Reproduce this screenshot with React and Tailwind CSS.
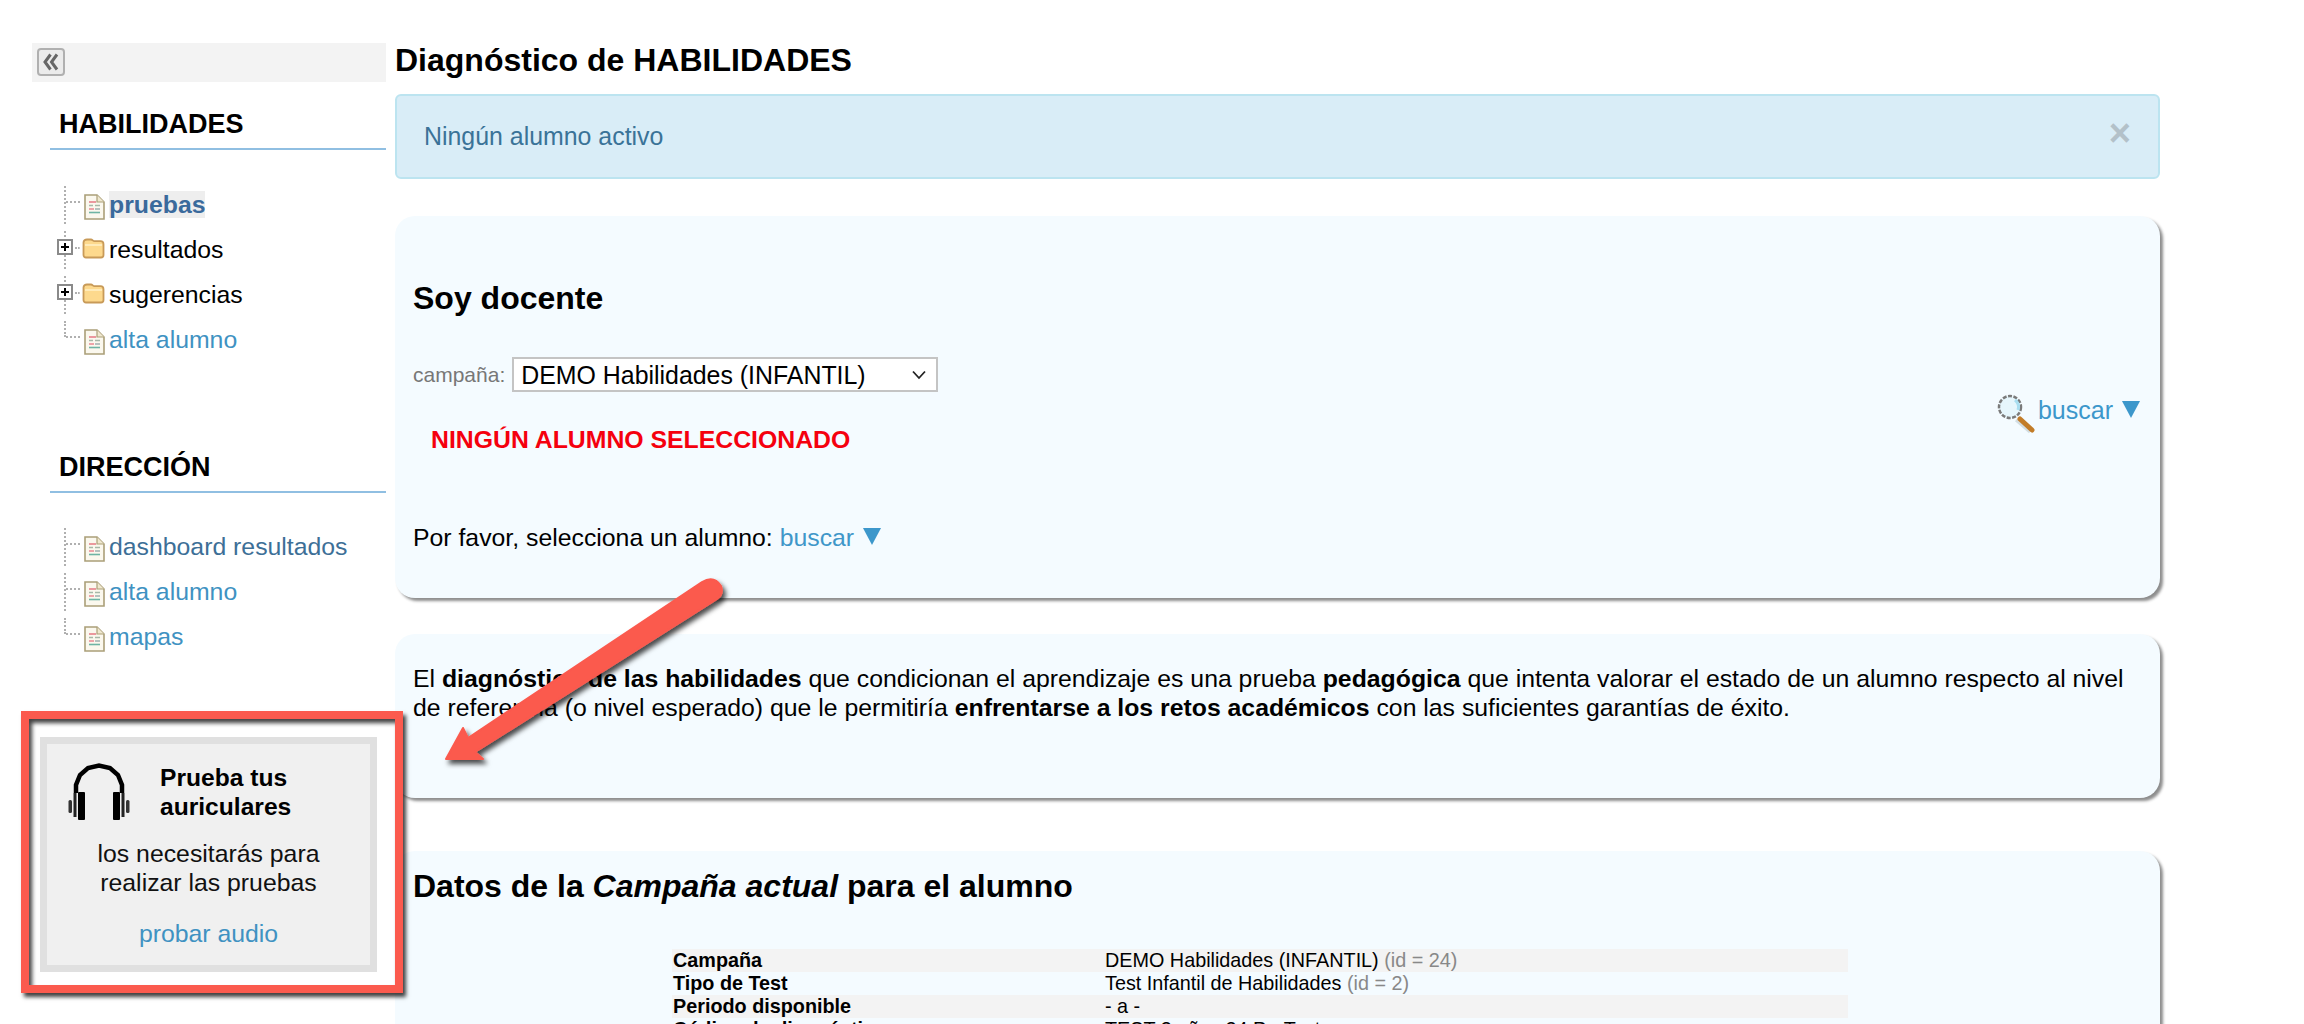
const FONT = "font-['Liberation_Sans',Arial,sans-serif]";

function FileIcon() {
  return (
    <svg width="21" height="26" viewBox="0 0 21 26" className="shrink-0">
      <path d="M1 1h12l7 7v17H1z" fill="#fbf8ee" stroke="#ab9f78" strokeWidth="1.6" />
      <path d="M13 1v7h7" fill="#efe8cf" stroke="#ab9f78" strokeWidth="1.2" />
      <path d="M5 8h7" stroke="#e8808a" strokeWidth="1.6" />
      <path d="M5 11.500h4M11 11.500h5" stroke="#a7b8a8" strokeWidth="1.4" />
      <path d="M5 15h5" stroke="#e8808a" strokeWidth="1.4" />
      <path d="M11 15h5" stroke="#9aa" strokeWidth="1.4" />
      <path d="M5 18.500h11" stroke="#6fb4a4" strokeWidth="1.6" />
    </svg>
  );
}

function FolderIcon() {
  return (
    <svg width="23" height="21" viewBox="0 0 23 21" className="shrink-0">
      <path d="M1.500 4.500C1.500 2.500 3 1.500 5 1.500h4c1.500 0 2 1.700 3.500 1.700h6c2 0 3 1 3 3V17c0 1.500-1 2.500-2.500 2.500H4c-1.500 0-2.500-1-2.500-2.500z" fill="#fdd98d" stroke="#c89a58" strokeWidth="1.800" />
      <path d="M3 7h17" stroke="#fff0c8" strokeWidth="1.500" />
    </svg>
  );
}

function PlusBox() {
  return (
    <div className="w-4 h-4 border-2 border-[#8a8a8a] bg-white flex items-center justify-center shrink-0 relative">
      <div className="absolute w-2 h-0.5 bg-black" />
      <div className="absolute h-2 w-0.5 bg-black" />
    </div>
  );
}

function TreeRow({ kind, last, children, textClass }) {
  return (
    <div className="relative h-[45px] flex items-center">
      <div className={`absolute left-[32px] top-[3px] w-0 border-l-2 border-dotted border-[#b0b0b0] ${last ? "h-[16px]" : "h-[38px]"}`} />
      {kind === "folder" ? (
        <>
          <div className="absolute left-[25px] top-[11px]"><PlusBox /></div>
          <div className="absolute left-[43px] top-[19px] w-[5px] border-t-2 border-dotted border-[#b0b0b0]" />
          <div className="absolute left-[50px] top-[10px]"><FolderIcon /></div>
        </>
      ) : (
        <>
          <div className="absolute left-[34px] top-[18px] w-[14px] border-t-2 border-dotted border-[#b0b0b0]" />
          <div className="absolute left-[52px] top-[11px]"><FileIcon /></div>
        </>
      )}
      <div className="pl-[77px] relative">
        <span className={`text-[24.800px] leading-[28px] ${textClass}`}>{children}</span>
      </div>
    </div>
  );
}

function Tri() {
  return <span className="inline-block align-[1px] ml-[9px] w-0 h-0 border-l-[9px] border-r-[9px] border-t-[17px] border-l-transparent border-r-transparent border-t-[#3c97cb]" />;
}

function SectionHead({ children }) {
  return (
    <div className="ml-[18px] pl-[9px] border-b-2 border-[#90bfe2] h-[41px] flex items-start">
      <h3 className="text-[27px] leading-[30px] font-bold text-black">{children}</h3>
    </div>
  );
}

function Headphones() {
  return (
    <svg width="62" height="58" viewBox="0 0 62 58" className="shrink-0 mt-[5px]">
      <path d="M8 30V22L12 12 20 5 31 2.500 42 5 50 12 54 22v8" fill="none" stroke="#000" strokeWidth="4.500" />
      <rect x="10" y="29" width="7" height="28" rx="1" fill="#000" />
      <rect x="45" y="29" width="7" height="28" rx="1" fill="#000" />
      <rect x="5.500" y="30" width="3" height="24" fill="#222" />
      <rect x="53.500" y="30" width="3" height="24" fill="#222" />
      <rect x="0.500" y="37" width="3.500" height="13" rx="1.500" fill="#333" />
      <rect x="58" y="37" width="3.500" height="13" rx="1.500" fill="#333" />
    </svg>
  );
}

function Magnifier() {
  return (
    <svg width="40" height="42" viewBox="0 0 40 42" className="shrink-0">
      <path d="M20 27L34 39" stroke="#d2dde2" strokeWidth="3" />
      <path d="M24 26L36 37" stroke="#c27c28" strokeWidth="5" strokeLinecap="round" />
      <circle cx="14" cy="14" r="11" fill="#e6f6fc" stroke="#7a7a7a" strokeWidth="2.500" strokeDasharray="4 1.500" />
      <path d="M19 7a9 9 0 0 1 3 10" fill="none" stroke="#a9def0" strokeWidth="3" />
    </svg>
  );
}

const rows = [
  ["Campaña", "DEMO Habilidades (INFANTIL)", "(id = 24)", true],
  ["Tipo de Test", "Test Infantil de Habilidades", "(id = 2)", false],
  ["Periodo disponible", "- a -", "", true],
  ["Código de diagnóstico", "TEST 3 años 24 PreTest", "", false],
];

export default function App() {
  return (
    <div className={`${FONT} relative w-[2304px] h-[1024px] overflow-hidden bg-white text-black flex`}>
      <aside className="w-[354px] ml-[32px] mr-[9px] pt-[43px] shrink-0 flex flex-col">
        <div className="h-[39px] bg-[#f3f3f3] pl-[5px] pt-[5px] shrink-0">
          <button className="w-[28px] h-[28px] rounded-[4px] border-2 border-[#b0b0b0] bg-[#ebebeb] flex items-center justify-center">
            <svg width="18" height="18" viewBox="0 0 18 18"><path d="M8.500 1.500L3 9l5.500 7.500M15 1.500L9.500 9 15 16.500" fill="none" stroke="#666" strokeWidth="3" /></svg>
          </button>
        </div>
        <div className="pt-[27px]"><SectionHead>HABILIDADES</SectionHead></div>
        <div className="pt-[33px]">
          <TreeRow kind="file" textClass="font-bold text-[#3a6a9c] bg-[#eeeeee]">pruebas</TreeRow>
          <TreeRow kind="folder">resultados</TreeRow>
          <TreeRow kind="folder">sugerencias</TreeRow>
          <TreeRow kind="file" last textClass="text-[#3f92c2]">alta alumno</TreeRow>
        </div>
        <div className="pt-[89px]"><SectionHead>DIRECCIÓN</SectionHead></div>
        <div className="pt-[32px]">
          <TreeRow kind="file" textClass="text-[#3d6f97]">dashboard resultados</TreeRow>
          <TreeRow kind="file" textClass="text-[#3f92c2]">alta alumno</TreeRow>
          <TreeRow kind="file" last textClass="text-[#3f92c2]">mapas</TreeRow>
        </div>
        <div className="mt-[77px] ml-[8px] w-[337px] h-[235px] shrink-0 border-[7px] border-[#e0e0e0] bg-[#f0f0f0] flex flex-col items-center">
          <div className="w-full flex pt-[14px] pl-[21px] h-[95px] shrink-0">
            <Headphones />
            <div className="ml-[30px] text-[24.600px] leading-[29px] font-bold pt-[5px]">Prueba tus<br />auriculares</div>
          </div>
          <div className="text-[24.800px] leading-[29px] text-center text-[#111]">los necesitarás para<br />realizar las pruebas</div>
          <a className="mt-[22px] text-[24.800px] leading-[29px] text-[#3f92c2]">probar audio</a>
        </div>
      </aside>

      <main className="w-[1765px] shrink-0 flex flex-col">
        <h1 className="mt-[43px] h-[51px] shrink-0 text-[32px] leading-[34px] font-bold">Diagnóstico de HABILIDADES</h1>
        <div className="h-[85px] shrink-0 rounded-[6px] border-2 border-[#bce4f0] bg-[#d9edf7] flex items-center justify-between pl-[27px] pr-[27px]">
          <span className="text-[24.900px] text-[#3a7398]">Ningún alumno activo</span>
          <span className="text-[38px] leading-none font-bold text-[#b3c1c9] -mt-[8px]">×</span>
        </div>

        <section className="mt-[37px] h-[382px] shrink-0 rounded-[20px] bg-[#f4fbff] shadow-[3px_3px_3px_rgba(0,0,0,0.45)] px-[18px] flex flex-col">
          <h2 className="pt-[63px] text-[32px] leading-[38px] font-bold">Soy docente</h2>
          <div className="flex items-start justify-between">
            <div className="pt-[40px] flex items-center">
              <span className="text-[21px] text-[#777]">campaña:</span>
              <div className="ml-[7px] w-[426px] h-[35px] border-2 border-[#c4c4c4] bg-white flex items-center justify-between pl-[7px] pr-[9px]">
                <span className="text-[24.900px] leading-[30px]">DEMO Habilidades (INFANTIL)</span>
                <svg width="16" height="10" viewBox="0 0 16 10"><path d="M2 1.500L8 8l6-6.500" fill="none" stroke="#222" strokeWidth="1.800" /></svg>
              </div>
            </div>
            <div className="pt-[76px] flex items-start mr-[2px]">
              <Magnifier />
              <span className="ml-[2px] text-[25px] leading-[34px] text-[#3c97cb]">buscar<Tri /></span>
            </div>
          </div>
          <div className="-mt-[10px] ml-[18px] text-[24.800px] leading-[30px] font-bold text-[#f5000e]">NINGÚN ALUMNO SELECCIONADO</div>
          <div className="mt-[68px] text-[24.800px] leading-[30px]">Por favor, selecciona un alumno: <span className="text-[#3f97c9]">buscar<Tri /></span></div>
        </section>

        <section className="mt-[36px] h-[164px] shrink-0 rounded-[20px] bg-[#f4fbff] shadow-[3px_3px_3px_rgba(0,0,0,0.45)] px-[18px] pt-[30px]">
          <p className="text-[24.800px] leading-[29px]">
            El <b>diagnóstico de las habilidades</b> que condicionan el aprendizaje es una prueba <b>pedagógica</b> que intenta valorar el estado de un alumno respecto al nivel de referencia (o nivel esperado) que le permitiría <b>enfrentarse a los retos académicos</b> con las suficientes garantías de éxito.
          </p>
        </section>

        <section className="mt-[53px] h-[300px] shrink-0 rounded-[20px] bg-[#f4fbff] shadow-[3px_3px_3px_rgba(0,0,0,0.45)] px-[18px] pt-[16px]">
          <h2 className="text-[32px] leading-[38px] font-bold">Datos de la <i>Campaña actual</i> para el alumno</h2>
          <div className="mt-[44px] ml-[259px] w-[1176px] flex flex-col">
            {rows.map(([a, b, c, shade]) => (
              <div key={a} className={`h-[23px] shrink-0 flex items-center text-[19.800px] leading-[23px] ${shade ? "bg-[#f3f3f3]" : ""}`}>
                <div className="w-[433px] pl-[1px] font-bold">{a}</div>
                <div>{b} <span className="text-[#888]">{c}</span></div>
              </div>
            ))}
          </div>
        </section>
      </main>

      <div className="absolute left-[21px] top-[711px] w-[382px] h-[282px] border-[8px] border-[#fb5a4e] shadow-[3px_4px_4px_rgba(0,0,0,0.75),inset_3px_4px_4px_rgba(0,0,0,0.75)]" />

      <svg className="absolute left-[430px] top-[570px]" width="310" height="210" viewBox="0 0 310 210">
        <defs>
          <filter id="s" x="-10%" y="-10%" width="120%" height="120%">
            <feDropShadow dx="3" dy="4" stdDeviation="2.500" floodColor="#000" floodOpacity="0.7" />
          </filter>
        </defs>
        <path d="M16 189L33 158 38 168 272 12Q284 5 291 16 294 24 287 29L45 182 53 189Z" fill="#fb5a4e" stroke="#fb5a4e" strokeWidth="2" strokeLinejoin="round" filter="url(#s)" />
      </svg>
    </div>
  );
}
